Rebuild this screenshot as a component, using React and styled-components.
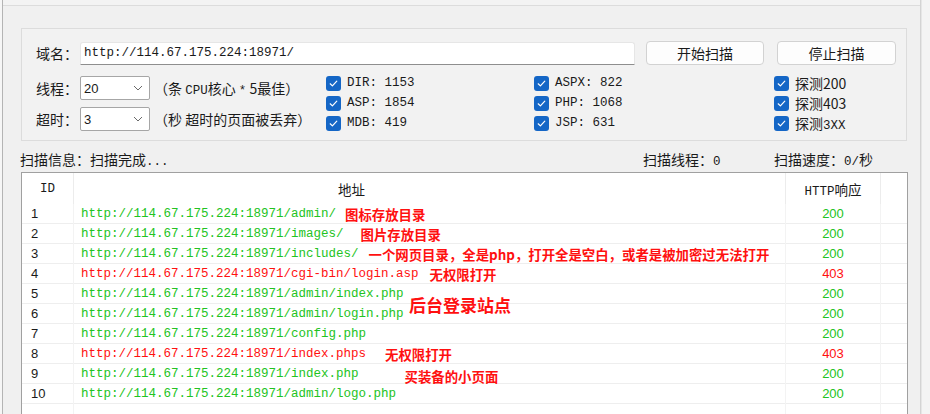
import React from 'react';
import styled, { createGlobalStyle } from 'styled-components';

const CJK = `"Noto Sans CJK SC", "Microsoft YaHei", sans-serif`;
const MONO = `"Liberation Mono", "Noto Sans CJK SC", monospace`;
const GREEN = '#22c322';
const RED = '#ff1010';

const Global = createGlobalStyle`
  html, body { margin: 0; padding: 0; background: #f0f0f0; }
  body { font-family: ${CJK}; font-size: 14px; color: #1a1a1a; }
`;

const Screen = styled.div`
  width: 930px;
  height: 414px;
  overflow: hidden;
  display: flex;
  background: #f0f0f0;
`;

const LeftEdge = styled.div`
  width: 2px;
  flex: none;
  background: #f6f6f6;
`;

const Frame = styled.div`
  width: 919px;
  flex: none;
  box-sizing: border-box;
  border-left: 1px solid #b4b4b4;
  border-right: 1px solid #d4d4d4;
  display: flex;
  flex-direction: column;
  overflow: hidden;
`;

const RightEdge = styled.div`
  flex: 1;
  background: #f4f4f4;
  border-left: 1px solid #e6e6e6;
`;

const TopStrip = styled.div`
  height: 5px;
  flex: none;
  background: #f3f3f3;
  border-bottom: 1px solid #dcdcdc;
`;

const Group = styled.div`
  flex: none;
  margin: 22px 0 0 18px;
  width: 886px;
  height: 113px;
  box-sizing: border-box;
  border: 1px solid #dcdcdc;
  background: #f2f2f2;
  padding: 12px 10px 0 14px;
  display: flex;
  flex-direction: column;
`;

const Row = styled.div`
  display: flex;
  align-items: center;
  height: 24px;
  flex: none;
`;

const Label = styled.span`
  width: 44px;
  flex: none;
  font-size: 14px;
  line-height: 24px;
  color: #1a1a1a;
`;

const UrlInput = styled.div`
  width: 555px;
  height: 23px;
  box-sizing: border-box;
  background: #fff;
  border: 1px solid #e6e6e6;
  border-bottom: 1px solid #8e8e8e;
  border-radius: 3px 3px 0 0;
  padding-left: 3px;
  display: flex;
  align-items: center;
  font-family: ${MONO};
  font-size: 12.5px;
  margin-right: 11px;
`;

const Button = styled.div`
  width: ${p => p.$w}px;
  height: 24px;
  box-sizing: border-box;
  margin-right: ${p => p.$mr || 0}px;
  background: #fdfdfd;
  border: 1px solid #d2d2d2;
  border-radius: 4px;
  display: flex;
  align-items: center;
  justify-content: center;
  font-size: 14px;
  color: #1a1a1a;
`;

const Lower = styled.div`
  display: flex;
  margin-top: 8px;
`;

const Settings = styled.div`
  width: 290px;
  flex: none;
  padding-top: 3px;
  display: flex;
  flex-direction: column;
  gap: 7px;
`;

const Select = styled.div`
  width: 70px;
  height: 24px;
  box-sizing: border-box;
  flex: none;
  background: #fff;
  border: 1px solid #a6a6a6;
  border-radius: 2px;
  padding: 0 6px 0 3px;
  display: flex;
  align-items: center;
  justify-content: space-between;
  font-family: "Liberation Sans", sans-serif;
  font-size: 13px;
`;

const Hint = styled.span`
  margin-left: 4px;
  font-size: 14px;
  white-space: nowrap;
`;

const Mono = styled.span`
  font-family: ${MONO};
  font-size: 12.5px;
`;

const CheckCol = styled.div`
  width: ${p => (p.$w ? `${p.$w}px` : 'auto')};
  flex: ${p => (p.$w ? 'none' : '1')};
  display: flex;
  flex-direction: column;
`;

const CheckItem = styled.div`
  height: 20px;
  display: flex;
  align-items: center;
  gap: 6px;
  font-size: ${p => (p.$mono ? '12.5px' : '14px')};
  font-family: ${p => (p.$mono ? MONO : CJK)};
  white-space: nowrap;
`;

const Box = styled.span`
  width: 15px;
  height: 15px;
  flex: none;
  border-radius: 3px;
  background: #1466c6;
  display: flex;
  align-items: center;
  justify-content: center;
`;

const Status = styled.div`
  flex: none;
  display: grid;
  grid-template-columns: 623px 131px auto;
  margin: 8px 0 0 17px;
  height: 20px;
  align-items: center;
  font-size: 14px;
  white-space: nowrap;
`;

const Table = styled.div`
  margin: 3px 0 0 18px;
  width: 887px;
  flex: 1 0 auto;
  box-sizing: border-box;
  border: 1px solid #a0a0a0;
  border-bottom: none;
  background: #fff;
  display: flex;
  flex-direction: column;
`;

const COLS = '52px 712px 95px 1fr';

const Header = styled.div`
  display: grid;
  grid-template-columns: ${COLS};
  height: 31px;
  flex: none;
`;

const HeadCell = styled.div`
  display: flex;
  align-items: center;
  justify-content: ${p => p.$align || 'center'};
  padding-left: ${p => p.$pl || 0}px;
  border-right: ${p => (p.$last ? 'none' : '1px solid #ececec')};
  font-size: 13.5px;
  color: #1a1a1a;
`;

const Body = styled.div`
  position: relative;
  flex: 1;
`;

const DataRow = styled.div`
  display: grid;
  grid-template-columns: ${COLS};
  height: 20px;
  box-sizing: border-box;
  border-bottom: 1px solid #eeeeee;
`;

const Cell = styled.div`
  display: flex;
  align-items: center;
  justify-content: ${p => p.$align || 'flex-start'};
  padding-left: ${p => p.$pl || 0}px;
  border-right: ${p => (p.$last ? 'none' : '1px solid #f3f3f3')};
  white-space: nowrap;
  overflow: visible;
  font-family: ${p => (p.$mono ? MONO : `"Liberation Sans", ${CJK}`)};
  font-size: ${p => (p.$mono ? '12.5px' : '13px')};
  color: ${p => p.$color || '#1a1a1a'};
  line-height: 20px;
`;

const Note = styled.span`
  margin-left: ${p => p.$gap}px;
  font-family: ${CJK};
  font-weight: 700;
  font-size: 13.4px;
  color: ${RED};
  position: relative;
  top: ${p => p.$dy || 0}px;
  z-index: 1;
`;

const BigNote = styled.span`
  position: absolute;
  left: 387px;
  top: 89px;
  font-family: ${CJK};
  font-weight: 700;
  font-size: 17px;
  line-height: 24px;
  color: ${RED};
`;

const FillerRow = styled.div`
  display: grid;
  grid-template-columns: ${COLS};
  height: 40px;
`;

const Check = () => (
  <Box>
    <svg width="11" height="11" viewBox="0 0 11 11">
      <path d="M2.2 5.8 L4.4 7.9 L8.8 3.2" fill="none" stroke="#ffffff" strokeWidth="1.2" strokeLinecap="round" strokeLinejoin="round" />
    </svg>
  </Box>
);

const Chevron = () => (
  <svg width="10" height="6" viewBox="0 0 10 6">
    <path d="M1 1 L5 5 L9 1" fill="none" stroke="#6a6a6a" strokeWidth="1" />
  </svg>
);

const BASE = 'http://114.67.175.224:18971/';

const rows = [
  { id: 1, path: 'admin/', ok: true, note: '图标存放目录', gap: 9 },
  { id: 2, path: 'images/', ok: true, note: '图片存放目录', gap: 17 },
  { id: 3, path: 'includes/', ok: true, note: '一个网页目录，全是php，打开全是空白，或者是被加密过无法打开', gap: 10 },
  { id: 4, path: 'cgi-bin/login.asp', ok: false, note: '无权限打开', gap: 11 },
  { id: 5, path: 'admin/index.php', ok: true },
  { id: 6, path: 'admin/login.php', ok: true },
  { id: 7, path: 'config.php', ok: true },
  { id: 8, path: 'index.phps', ok: false, note: '无权限打开', gap: 19 },
  { id: 9, path: 'index.php', ok: true, note: '买装备的小页面', gap: 46, dy: 2 },
  { id: 10, path: 'admin/logo.php', ok: true },
];

export default function App() {
  return (
    <>
      <Global />
      <Screen>
        <LeftEdge />
        <Frame>
          <TopStrip />
          <Group>
            <Row>
              <Label>域名：</Label>
              <UrlInput>{BASE}</UrlInput>
              <Button $w={118} $mr={13}>开始扫描</Button>
              <Button $w={119}>停止扫描</Button>
            </Row>
            <Lower>
              <Settings>
                <Row>
                  <Label>线程：</Label>
                  <Select>20<Chevron /></Select>
                  <Hint>（条 <Mono>CPU</Mono>核心 <Mono>*</Mono> 5最佳）</Hint>
                </Row>
                <Row>
                  <Label>超时：</Label>
                  <Select>3<Chevron /></Select>
                  <Hint>（秒 超时的页面被丢弃）</Hint>
                </Row>
              </Settings>
              <CheckCol $w={208}>
                <CheckItem $mono><Check /><span>DIR: 1153</span></CheckItem>
                <CheckItem $mono><Check /><span>ASP: 1854</span></CheckItem>
                <CheckItem $mono><Check /><span>MDB: 419</span></CheckItem>
              </CheckCol>
              <CheckCol $w={240}>
                <CheckItem $mono><Check /><span>ASPX: 822</span></CheckItem>
                <CheckItem $mono><Check /><span>PHP: 1068</span></CheckItem>
                <CheckItem $mono><Check /><span>JSP: 631</span></CheckItem>
              </CheckCol>
              <CheckCol>
                <CheckItem><Check /><span>探测200</span></CheckItem>
                <CheckItem><Check /><span>探测403</span></CheckItem>
                <CheckItem><Check /><span>探测<Mono>3XX</Mono></span></CheckItem>
              </CheckCol>
            </Lower>
          </Group>
          <Status>
            <span>扫描信息：扫描完成<Mono>...</Mono></span>
            <span>扫描线程：<Mono>0</Mono></span>
            <span>扫描速度：<Mono>0/</Mono>秒</span>
          </Status>
          <Table>
            <Header>
              <HeadCell><Mono>ID</Mono></HeadCell>
              <HeadCell $align="flex-start" $pl={264}>地址</HeadCell>
              <HeadCell><span><Mono>HTTP</Mono>响应</span></HeadCell>
              <HeadCell $last />
            </Header>
            <Body>
              {rows.map(r => (
                <DataRow key={r.id}>
                  <Cell $pl={9}>{r.id}</Cell>
                  <Cell $pl={7} $mono $color={r.ok ? GREEN : RED}>
                    {BASE + r.path}
                    {r.note && <Note $gap={r.gap} $dy={r.dy}>{r.note}</Note>}
                  </Cell>
                  <Cell $align="center" $color={r.ok ? GREEN : RED}>{r.ok ? '200' : '403'}</Cell>
                  <Cell $last />
                </DataRow>
              ))}
              <FillerRow>
                <Cell />
                <Cell />
                <Cell />
                <Cell $last />
              </FillerRow>
              <BigNote>后台登录站点</BigNote>
            </Body>
          </Table>
        </Frame>
        <RightEdge />
      </Screen>
    </>
  );
}
